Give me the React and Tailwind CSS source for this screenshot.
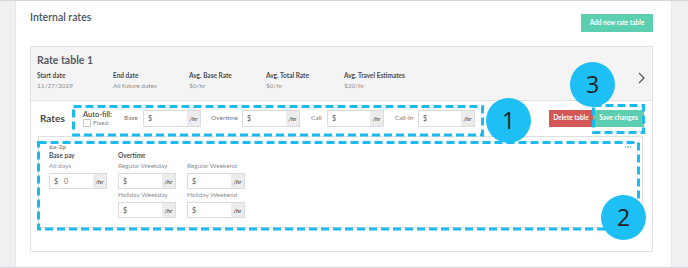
import React from "react";

function RateInput({ w = "w-[58px]", h = "h-[17px]", value = "" }) {
  return (
    <div className={`${w} ${h} flex border border-[#dcdcdc] bg-white`}>
      <div className="flex-1 flex items-center pl-[4px] text-[7px] text-[#555]">
        <span>$</span>
        {value ? <span className="ml-[6px] text-[#777]">{value}</span> : null}
      </div>
      <div className="w-[13px] flex items-center justify-center bg-[#ececec] text-[6px] font-bold italic text-[#666]">/hr</div>
    </div>
  );
}

function HeaderCol({ label, value, w }) {
  return (
    <div className={`${w} flex flex-col`}>
      <div className="h-[10px] leading-[10px] text-[6.5px] font-bold text-[#4d4d4d]">{label}</div>
      <div className="h-[10px] leading-[10px] text-[6.5px] text-[#8d9095]">{value}</div>
    </div>
  );
}

function Field({ label, value }) {
  return (
    <div className="w-[58px] flex flex-col">
      <div className="h-[10px] leading-[10px] text-[6.5px] text-[#8a9096]">{label}</div>
      <div className="mt-[2px]">
        <RateInput h="h-[16px]" value={value} />
      </div>
    </div>
  );
}

export default function App() {
  return (
    <div className="relative w-[688px] h-[268px] flex border-y border-[#d5d5d5] bg-white overflow-hidden font-['Lato',sans-serif]">
      <div className="w-[16px] bg-[#f0f0f2] border-r border-[#e8e8ea]" />
      <div className="flex-1 flex flex-col pl-[14px] pr-[18px]">
        <div className="h-[45px] flex items-start justify-between">
          <div className="mt-[9px] text-[10.5px] leading-[14px] font-semibold text-[#4c5560]">Internal rates</div>
          <div className="mt-[13px] w-[72px] h-[18px] flex items-center justify-center bg-[#5ccfb0] text-white text-[6.5px] font-bold">
            Add new rate table
          </div>
        </div>
        <div className="border border-[#e2e2e2] flex flex-col h-[206px]">
          {/* header */}
          <div className="h-[54px] bg-[#f4f4f4] border-b border-[#e2e2e2] flex pl-[6px]">
            <div className="flex flex-col pt-[6px]">
              <div className="h-[14px] leading-[14px] text-[10.5px] font-bold text-[#555b61]">Rate table 1</div>
              <div className="mt-[4px] flex">
                <HeaderCol w="w-[76px]" label="Start date" value="11/27/2019" />
                <HeaderCol w="w-[76px]" label="End date" value="All future dates" />
                <HeaderCol w="w-[77px]" label="Avg. Base Rate" value="$0/hr" />
                <HeaderCol w="w-[78px]" label="Avg. Total Rate" value="$0/hr" />
                <HeaderCol w="w-[80px]" label="Avg. Travel Estimates" value="$20/hr" />
              </div>
            </div>
            <svg className="ml-auto mr-[7px] mt-[25px]" width="7" height="12" viewBox="0 0 7 12">
              <path d="M1 1 L6 6 L1 11" fill="none" stroke="#555" strokeWidth="1.2" />
            </svg>
          </div>
          {/* rates row */}
          <div className="h-[34px] flex items-center pl-[9px] pr-[8px]">
            <div className="w-[43px] text-[10px] font-bold text-[#4a4a4a]">Rates</div>
            <div className="w-[41px] flex flex-col">
              <div className="text-[7.5px] leading-[9px] font-semibold text-[#4a4a4a]">Auto-fill:</div>
              <div className="flex items-center">
                <div className="w-[8px] h-[8px] border border-[#c4c4c4] bg-white rounded-[1px]" />
                <span className="ml-[2px] text-[6.5px] leading-[8px] text-[#888]">Fixed</span>
              </div>
            </div>
            <div className="w-[19px] text-[6.5px] text-[#777]">Base</div>
            <RateInput w="w-[58px]" />
            <div className="ml-[10px] w-[31px] text-[6.5px] text-[#777]">Overtime</div>
            <RateInput w="w-[58px]" />
            <div className="ml-[11px] w-[16px] text-[6.5px] text-[#777]">Call</div>
            <RateInput w="w-[57px]" />
            <div className="ml-[11px] w-[23px] text-[6.5px] text-[#777]">Call-In</div>
            <RateInput w="w-[57px]" />
            <div className="ml-auto flex">
              <div className="w-[44px] h-[17px] flex items-center justify-center bg-[#d35757] text-white text-[6.5px] font-bold">Delete table</div>
              <div className="w-[51px] h-[17px] flex items-center justify-center bg-[#5ccfb0] text-white text-[6.5px] font-bold">Save changes</div>
            </div>
          </div>
          {/* inner box */}
          <div className="relative mt-[1px] ml-[7px] mr-[9px] h-[92px] border border-[#e0e0e0] pl-[10px] pt-[5px]">
            <div className="h-[9px] leading-[9px] text-[6.5px] text-[#666]">6a-2p</div>
            <div className="flex">
              <div className="w-[58px] flex flex-col">
                <div className="h-[10px] leading-[10px] text-[6.5px] font-bold text-[#555]">Base pay</div>
                <Field label="All days" value="0" />
              </div>
              <div className="ml-[11px] flex flex-col">
                <div className="h-[10px] leading-[10px] text-[6.5px] font-bold text-[#555]">Overtime</div>
                <div className="flex gap-[11px]">
                  <Field label="Regular Weekday" />
                  <Field label="Regular Weekend" />
                </div>
                <div className="flex gap-[11px] mt-[1px]">
                  <Field label="Holiday Weekday" />
                  <Field label="Holiday Weekend" />
                </div>
              </div>
            </div>
            <div className="absolute right-[11px] top-[9px] flex gap-[1px]">
              <div className="w-[1.5px] h-[1.5px] bg-[#8fd6c4]" />
              <div className="w-[1.5px] h-[1.5px] bg-[#8fd6c4]" />
              <div className="w-[1.5px] h-[1.5px] bg-[#8fd6c4]" />
            </div>
          </div>
        </div>
      </div>
      <div className="w-[17px] bg-[#f0f0f2] border-l border-[#e8e8ea]" />

      {/* annotations */}
      <svg className="absolute left-0 top-0 pointer-events-none" width="688" height="268">
        <g fill="none" stroke="#1cbaf3" strokeWidth="3" strokeDasharray="8 4">
          <rect x="73.5" y="105.5" width="409" height="28.5" />
          <rect x="593.5" y="104.5" width="50" height="27" />
          <rect x="38.5" y="141.5" width="600" height="86.5" />
        </g>
      </svg>
      <div className="absolute left-[486px] top-[97px] w-[45px] h-[45px] rounded-full bg-[#1ebff5] flex items-center justify-center text-[23px] text-[#222] font-['Open_Sans',sans-serif]">1</div>
      <div className="absolute left-[601px] top-[194px] w-[45px] h-[45px] rounded-full bg-[#1ebff5] flex items-center justify-center text-[23px] text-[#222] font-['Open_Sans',sans-serif]">2</div>
      <div className="absolute left-[570px] top-[61px] w-[45px] h-[45px] rounded-full bg-[#1ebff5] flex items-center justify-center text-[23px] text-[#222] font-['Open_Sans',sans-serif]">3</div>
    </div>
  );
}
